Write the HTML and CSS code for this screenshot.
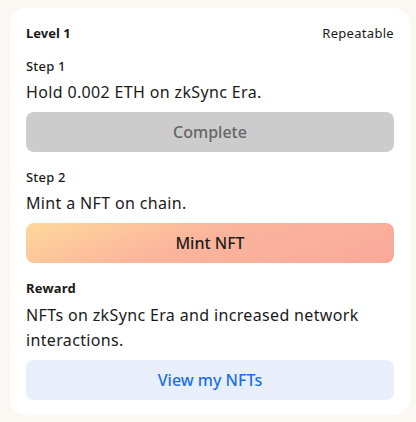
FILE: index.html
```html
<!DOCTYPE html>
<html lang="en">
<head>
  <meta charset="UTF-8">
  <title>Level 1</title>
  <link rel="stylesheet" href="styles.css">
</head>
<body>
  <div class="card">
    <div class="card-head">
      <span class="level">Level 1</span>
      <span class="repeat">Repeatable</span>
    </div>

    <div class="step">
      <p class="label">Step 1</p>
      <p class="desc">Hold 0.002 ETH on zkSync Era.</p>
      <button class="btn btn-done">Complete</button>
    </div>

    <div class="step">
      <p class="label">Step 2</p>
      <p class="desc">Mint a NFT on chain.</p>
      <button class="btn btn-mint">Mint NFT</button>
    </div>

    <div class="step">
      <p class="label label-bold">Reward</p>
      <p class="desc desc-wrap">NFTs on zkSync Era and increased network interactions.</p>
      <button class="btn btn-view">View my NFTs</button>
    </div>
  </div>
</body>
</html>
```

FILE: styles.css
```css
body {
  margin: 0;
  padding: 8px 6px 7px 10px;
  background-color: #fbf7f3;
  font-family: "Noto Sans", sans-serif;
  color: #1a1a1a;
}

.card {
  width: 400px;
  box-sizing: border-box;
  background: #fff;
  border-radius: 16px;
  padding: 16px 16px 15px 16px;
}

.card-head {
  display: flex;
  justify-content: space-between;
  align-items: center;
  font-size: 13px;
  line-height: 18px;
}

.level {
  font-weight: 700;
}

.repeat {
  letter-spacing: 0.3px;
}

.step {
  margin-top: 15px;
}

.step + .step {
  margin-top: 16px;
}

.label {
  margin: 0;
  font-size: 13px;
  line-height: 18px;
  font-weight: 500;
  letter-spacing: 0.2px;
}

.label-bold {
  font-weight: 700;
}

.desc {
  margin: 5px 0 8px 0;
  font-size: 16px;
  line-height: 24px;
  letter-spacing: 0.35px;
}

.desc-wrap {
  line-height: 25px;
  margin: 6px 0 7px 0;
}

.btn {
  display: block;
  width: 100%;
  height: 40px;
  border: none;
  border-radius: 8px;
  font-family: inherit;
  font-size: 16px;
  font-weight: 500;
  cursor: pointer;
}

.btn-done {
  background: #cccccc;
  color: #666;
}

.btn-mint {
  background: linear-gradient(160deg, #fed89c 0%, #fbb59c 45%, #faa89b 100%);
  color: #1e1e1e;
}

.btn-view {
  background: #e8effb;
  color: #1a6fe6;
}
```
